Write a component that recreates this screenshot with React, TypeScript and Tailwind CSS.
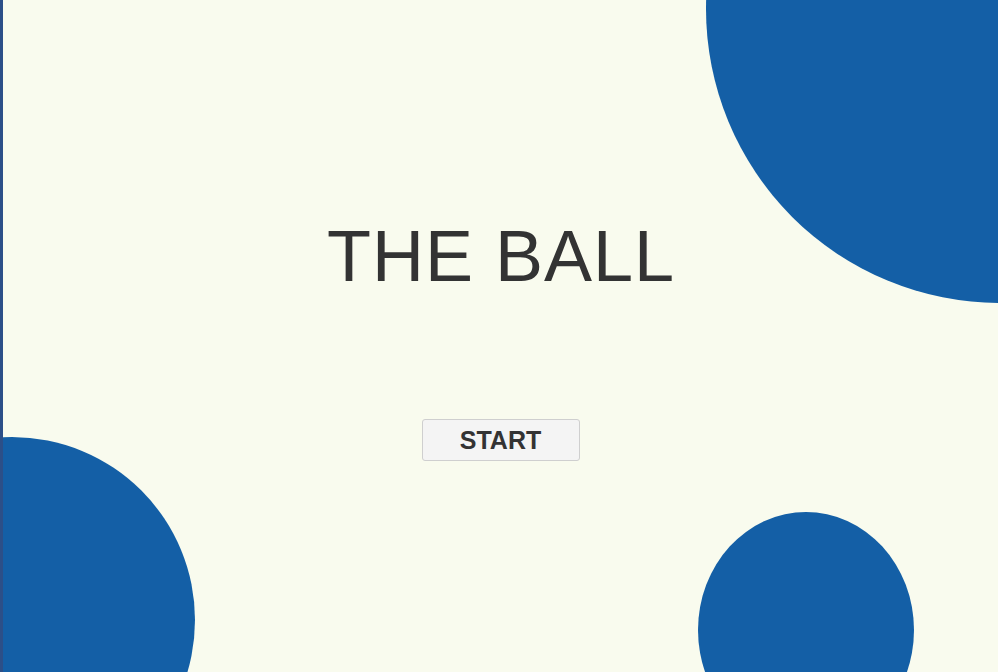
import React from "react";

const App = () => {
	return (
		<div
			className="relative h-[672px] w-full overflow-hidden border-l-[3px] border-[#2c4f88] bg-[#f9fbee]"
			style={{ fontFamily: '"Liberation Sans", Arial, sans-serif' }}
		>
			{/* balls */}
			<div className="absolute left-[703px] top-[-285px] h-[588px] w-[588px] rounded-full bg-[#145fa6]" />
			<div className="absolute left-[-174px] top-[437px] h-[366px] w-[366px] rounded-full bg-[#145fa6]" />
			<div className="absolute left-[695px] top-[512px] h-[236px] w-[216px] rounded-[50%] bg-[#145fa6]" />

			<div className="relative flex flex-col items-center pt-[220px]">
				<h1 className="pl-[1px] text-[72px] leading-[72px] font-normal tracking-[1px] text-[#333333]">
					THE BALL
				</h1>
				<button
					type="button"
					className="mt-[127px] flex h-[42px] w-[158px] items-center justify-center rounded-[3px] border border-[#cfcfcf] bg-[#f4f4f4] text-[25px] leading-[25px] font-bold text-[#333333]"
				>
					START
				</button>
			</div>
		</div>
	);
};

export default App;
